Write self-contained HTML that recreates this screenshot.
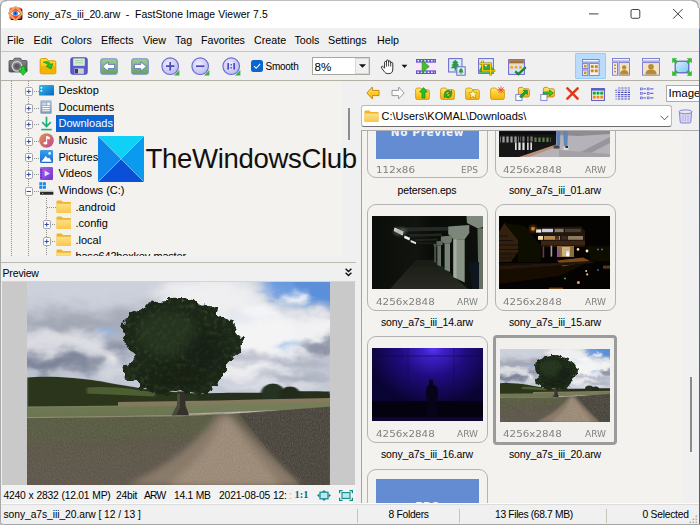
<!DOCTYPE html>
<html lang="en">
<head>
<meta charset="utf-8">
<title>FastStone Image Viewer</title>
<style>
*{box-sizing:border-box;margin:0;padding:0}
html,body{width:700px;height:525px;overflow:hidden}
body{position:relative;background:#f0f0f0;font-family:"Liberation Sans",sans-serif;color:#000;font-size:11px}
.abs{position:absolute}
.t{position:absolute;white-space:pre;line-height:1}
#win{position:absolute;left:0;top:0;width:700px;height:525px;background:#f0f0f0;overflow:hidden}
#title{position:absolute;left:0;top:0;width:700px;height:28px;background:#fff}
#menu{position:absolute;left:0;top:28px;width:700px;height:23px;background:#f0f0f0}
#menu .t{font-size:10.7px;top:7px;color:#000}
#tb{position:absolute;left:0;top:51px;width:700px;height:30px;background:#f0f0f0}
#tree{position:absolute;left:2px;top:81px;width:339.5px;height:175px;background:#f3f2ee;overflow:hidden}
#tree .t{font-size:11px;color:#000}
#prevhdr{position:absolute;left:0;top:262px;width:356px;height:20px;background:#f0f0f0;border-top:1px solid #bcb8ad;border-bottom:1px solid #d4d4d4}
#prev{position:absolute;left:2px;top:282px;width:353px;height:203px;background:#c9c9c9}
#info{position:absolute;left:0;top:485px;width:356px;height:18.5px;background:#f2f2f2}
#status{position:absolute;left:0;top:503px;width:700px;height:23px;background:#f0f0f0;border-top:1.5px solid #fbfbfb}
#right{position:absolute;left:361px;top:131px;width:322px;height:372px;background:#f3f2ee;overflow:hidden}
.vdot{width:1px;background:repeating-linear-gradient(to bottom,#8f8f8f 0,#8f8f8f 1px,transparent 1px,transparent 2px)}
.hdot{height:1px;background:repeating-linear-gradient(to right,#8f8f8f 0,#8f8f8f 1px,transparent 1px,transparent 2px)}
.thumb{position:absolute;width:121px;height:107px;border:1px solid #b3b3b3;border-radius:9px;background:#f3f2ee}
.thumb.sel{border:3px solid #9a9a9a;border-radius:3px;background:#e9e9e9}
.meta{position:absolute;font-family:"DejaVu Sans","Liberation Sans",sans-serif;font-size:8.4px;color:#808080;white-space:pre;line-height:1;transform:scaleX(1.235);transform-origin:0 0}
.meta.r{transform-origin:100% 0;transform:scaleX(1.08)}
.cap{position:absolute;font-size:10.5px;letter-spacing:-0.16px;white-space:pre;line-height:1;text-align:center;width:128px}
</style>
</head>
<body>
<div id="win">
<!-- TITLE BAR -->
<div id="title">
  <svg class="abs" style="left:8px;top:5.5px" width="15.5" height="15.5" viewBox="0 0 16 16"><defs><linearGradient id="gIco" x1="0" y1="0" x2="1" y2="1"><stop offset="0" stop-color="#ff7a4a"/><stop offset="1" stop-color="#f02a0c"/></linearGradient><radialGradient id="gEye" cx="0.5" cy="0.5" r="0.5"><stop offset="0" stop-color="#0a1a50"/><stop offset="0.35" stop-color="#1668d8"/><stop offset="1" stop-color="#49a8f6"/></radialGradient></defs><rect x="2.4" y="2.6" width="12.4" height="11.8" rx="1.2" fill="#1a0a06"/><rect x="1.4" y="1.6" width="12.4" height="11.8" rx="1.6" fill="url(#gIco)"/><path d="M7.8 0.6 L14.8 7.6 L7.8 14.8 L0.6 7.6 Z" fill="none" stroke="#e0ac72" stroke-width="1.9"/><path d="M2.6 7.7 Q7.8 2.8 13 7.7 Q7.8 12.4 2.6 7.7 Z" fill="#fff4ea"/><circle cx="7.6" cy="7.6" r="2.7" fill="url(#gEye)"/></svg>
  <svg class="abs" style="left:588px;top:8px" width="100" height="12" viewBox="0 0 100 12"><path d="M1 5.9 H10.4" stroke="#2a2a2a" stroke-width="0.9"/><rect x="43" y="1.5" width="8.8" height="8.8" rx="1.5" fill="none" stroke="#2a2a2a" stroke-width="0.9"/><path d="M85.2 1 L94.6 10.6 M94.6 1 L85.2 10.6" stroke="#2a2a2a" stroke-width="0.9"/></svg>

  <span class="t" style="left:27.5px;top:10px;font-size:10.4px;letter-spacing:-0.08px">sony_a7s_iii_20.arw</span><span class="t" style="left:125.8px;top:10px;font-size:10.4px">-</span><span class="t" style="left:135px;top:10px;font-size:10.4px;letter-spacing:0.07px">FastStone Image Viewer 7.5</span>
</div>
<!-- MENU -->
<div id="menu">
  <span class="t" style="left:7.0px">File</span>
  <span class="t" style="left:33.5px">Edit</span>
  <span class="t" style="left:61.0px">Colors</span>
  <span class="t" style="left:101.0px">Effects</span>
  <span class="t" style="left:143.0px">View</span>
  <span class="t" style="left:175.0px">Tag</span>
  <span class="t" style="left:201.0px">Favorites</span>
  <span class="t" style="left:254.0px">Create</span>
  <span class="t" style="left:294.5px">Tools</span>
  <span class="t" style="left:328.0px">Settings</span>
  <span class="t" style="left:377.0px">Help</span>
</div>
<!-- TOOLBAR -->
<div id="tb"></div>
<div class="abs" style="left:0;top:51px;width:700px;height:1px;background:#c9c5bb"></div>
<div class="abs" style="left:0;top:80px;width:700px;height:1px;background:#b5b0a6"></div>
<svg width="0" height="0" style="position:absolute"><defs>
<linearGradient id="gGrn" x1="0" y1="0" x2="0" y2="1"><stop offset="0" stop-color="#9ccf93"/><stop offset="1" stop-color="#62a35a"/></linearGradient>
<radialGradient id="gLav" cx="0.4" cy="0.35" r="0.7"><stop offset="0" stop-color="#eeeeff"/><stop offset="1" stop-color="#b9b9f2"/></radialGradient>
<linearGradient id="gCam" x1="0" y1="0" x2="0" y2="1"><stop offset="0" stop-color="#8c8c92"/><stop offset="1" stop-color="#55555c"/></linearGradient>
<linearGradient id="gYel" x1="0" y1="0" x2="0" y2="1"><stop offset="0" stop-color="#ffe23a"/><stop offset="1" stop-color="#f0b000"/></linearGradient>
<linearGradient id="gBlu" x1="0" y1="0" x2="1" y2="1"><stop offset="0" stop-color="#d9f0ff"/><stop offset="1" stop-color="#7cc6f2"/></linearGradient>
</defs></svg>
<!-- camera -->
<svg class="abs" style="left:8px;top:57px" width="20" height="19" viewBox="0 0 20 19"><path d="M1 4.5 Q1 3.5 2 3.5 H5 L6.5 1.2 H12.5 L14 3.5 H18 Q19 3.5 19 4.5 V14 Q19 15 18 15 H2 Q1 15 1 14 Z" fill="url(#gCam)" stroke="#4a4a50" stroke-width="0.8"/><circle cx="9" cy="9.3" r="4.8" fill="#7d7d84" stroke="#d2d2d6" stroke-width="1.3"/><circle cx="9" cy="9.3" r="2.6" fill="#5a5a61"/><path d="M13.2 9.5 H17 V13.2 H19.3 L15.1 18.3 L10.9 13.2 H13.2 Z" fill="#22d02a" stroke="#0c8a14" stroke-width="0.7"/></svg>
<!-- open folder -->
<svg class="abs" style="left:39px;top:57px" width="18" height="18" viewBox="0 0 18 18"><path d="M1.2 3 Q1.2 1.6 2.6 1.6 H7.5 L9.5 3.8 H15.4 Q16.8 3.8 16.8 5.2 V15.4 Q16.8 16.8 15.4 16.8 H2.6 Q1.2 16.8 1.2 15.4 Z" fill="url(#gYel)" stroke="#d59a00" stroke-width="1"/><path d="M1.8 9 H16.2 V15.4 Q16.2 16.2 15.4 16.2 H2.6 Q1.8 16.2 1.8 15.4 Z" fill="#f2b400"/><path d="M4.2 5.2 C7.5 3.6 10.6 4.6 11.6 7.4 L13.8 6.6 L12 12 L7 9.2 L9.3 8.3 C8.6 6.6 6.6 6 4.2 5.2 Z" fill="#1fc62a" stroke="#0e8a16" stroke-width="0.6"/></svg>
<!-- save -->
<svg class="abs" style="left:70px;top:57px" width="18" height="18" viewBox="0 0 18 18"><rect x="0.8" y="0.8" width="16.4" height="16.4" rx="1.6" fill="#5c5ccc" stroke="#4444b0" stroke-width="0.9"/><rect x="3.2" y="1.4" width="11.6" height="7.4" fill="#d8efd4"/><path d="M5 3.6 H13 M5 5.8 H13" stroke="#a9cfa6" stroke-width="1"/><rect x="4.6" y="11.4" width="9.2" height="5.4" fill="#cfcfd6"/><rect x="5" y="12" width="3" height="4.4" fill="#3c3c60"/></svg>
<!-- prev / next -->
<svg class="abs" style="left:100px;top:57.5px" width="18" height="17" viewBox="0 0 18 17"><rect x="0.7" y="0.7" width="16.6" height="15.6" rx="2.6" fill="url(#gGrn)" stroke="#7d8fd0" stroke-width="1.1"/><path d="M2.6 8.5 L8.2 3.8 V6.4 H14.6 V10.6 H8.2 V13.2 Z" fill="#fff" stroke="#5a62c0" stroke-width="0.8"/></svg>
<svg class="abs" style="left:130.5px;top:57.5px" width="18" height="17" viewBox="0 0 18 17"><rect x="0.7" y="0.7" width="16.6" height="15.6" rx="2.6" fill="url(#gGrn)" stroke="#7d8fd0" stroke-width="1.1"/><path d="M15.4 8.5 L9.8 3.8 V6.4 H3.4 V10.6 H9.8 V13.2 Z" fill="#fff" stroke="#5a62c0" stroke-width="0.8"/></svg>
<!-- zoom in / out / 1:1 -->
<svg class="abs" style="left:160.5px;top:57px" width="19" height="19" viewBox="0 0 19 19"><path d="M13 18.4 H18.4 V13 Z" fill="#3fae45"/><circle cx="9.2" cy="9.2" r="8.3" fill="url(#gLav)" stroke="#6a6acc" stroke-width="1.1"/><path d="M5 9.2 H13.4 M9.2 5 V13.4" stroke="#4a4ab4" stroke-width="1.7"/></svg>
<svg class="abs" style="left:191px;top:57px" width="19" height="19" viewBox="0 0 19 19"><path d="M13 18.4 H18.4 V13 Z" fill="#3fae45"/><circle cx="9.2" cy="9.2" r="8.3" fill="url(#gLav)" stroke="#6a6acc" stroke-width="1.1"/><path d="M5 9.2 H13.4" stroke="#4a4ab4" stroke-width="1.7"/></svg>
<svg class="abs" style="left:221.5px;top:57px" width="19" height="19" viewBox="0 0 19 19"><path d="M13 18.4 H18.4 V13 Z" fill="#3fae45"/><circle cx="9.2" cy="9.2" r="8.3" fill="url(#gLav)" stroke="#6a6acc" stroke-width="1.1"/><path d="M6.2 6 V12.4 M12.2 6 V12.4" stroke="#4a4ab4" stroke-width="1.7"/><path d="M9.2 7 V8.4 M9.2 10 V11.4" stroke="#4a4ab4" stroke-width="1.3"/></svg>
<!-- checkbox + smooth -->
<div class="abs" style="left:251px;top:60px;width:12px;height:12px;background:#0a64d1;border-radius:2.5px"></div>
<svg class="abs" style="left:251px;top:60px" width="12" height="12" viewBox="0 0 12 12"><path d="M3 6.2 L5.2 8.3 L9.2 3.8" fill="none" stroke="#fff" stroke-width="1.1"/></svg>
<span class="t" style="left:265.5px;top:61.5px;font-size:10px;letter-spacing:-0.25px">Smooth</span>
<!-- combo -->
<div class="abs" style="left:312px;top:57px;width:58px;height:18px;background:#fff;border:1px solid #aaa69c"></div>
<div class="abs" style="left:355px;top:58px;width:14px;height:16px;background:#f0f0f0;border:1px solid #d8d8d8"></div>
<span class="t" style="left:314.5px;top:60.5px;font-size:11.6px">8%</span>
<svg class="abs" style="left:358px;top:63px" width="9" height="6" viewBox="0 0 9 6"><path d="M1 1.2 H8 L4.5 4.8 Z" fill="#111"/></svg>
<!-- hand -->
<svg class="abs" style="left:380px;top:59px" width="16" height="16" viewBox="0 0 16 16"><path d="M4.6 9.2 V3.6 Q4.6 2.4 5.6 2.4 Q6.5 2.4 6.5 3.6 V2.2 Q6.5 1 7.6 1 Q8.6 1 8.6 2.2 V3 Q8.6 1.9 9.7 1.9 Q10.7 1.9 10.7 3 V4.4 Q10.7 3.4 11.7 3.4 Q12.8 3.4 12.8 4.6 V10 Q12.8 14.6 8.8 14.6 H7.6 Q5.6 14.6 4.4 12.8 L1.6 9 Q1 8 1.8 7.4 Q2.6 6.9 3.4 7.8 Z" fill="#fff" stroke="#1a1a1a" stroke-width="0.9"/><path d="M6.5 3.6 V7.6 M8.6 3 V7.4 M10.7 4.4 V7.6" stroke="#1a1a1a" stroke-width="0.8"/></svg>
<svg class="abs" style="left:401px;top:64px" width="7" height="5" viewBox="0 0 7 5"><path d="M0.6 0.8 H6.4 L3.5 4 Z" fill="#111"/></svg>
<!-- slideshow -->
<svg class="abs" style="left:416px;top:59px" width="20" height="15" viewBox="0 0 20 15"><rect width="20" height="15" fill="#fbd0f2"/><rect y="4" width="20" height="7" fill="#fde4f6"/><rect width="20" height="3.6" fill="#5a5acc"/><rect y="11.4" width="20" height="3.6" fill="#5a5acc"/><path d="M1.4 1.8 H19" stroke="#e8e8ff" stroke-width="1.5" stroke-dasharray="1.7 1.7"/><path d="M1.4 13.2 H19" stroke="#e8e8ff" stroke-width="1.5" stroke-dasharray="1.7 1.7"/><path d="M6.2 1.6 L13.2 7.5 L6.2 13.4 Z" fill="#3fc22e" stroke="#25901c" stroke-width="0.7"/></svg>
<!-- compare -->
<svg class="abs" style="left:447.5px;top:57.5px" width="18" height="18" viewBox="0 0 18 18"><rect x="0.6" y="0.6" width="13.4" height="13.4" fill="#d8ecfc" stroke="#6868c8" stroke-width="1"/><path d="M7.2 1.8 L10.6 5 H9 L11.4 7.6 H9.4 L12 10.2 H2.6 L5.2 7.6 H3.2 L5.6 5 H4 Z" fill="#2b9a3c"/><rect x="6.6" y="10" width="1.4" height="2.6" fill="#2b9a3c"/><rect x="8.8" y="8.8" width="8.4" height="8.4" fill="#e2f1fd" stroke="#6868c8" stroke-width="1"/><path d="M13 10 L15.4 12.4 H14.2 L15.8 14.4 H10.2 L11.8 12.4 H10.6 Z" fill="#2b9a3c"/><rect x="12.5" y="14.2" width="1.1" height="1.8" fill="#2b9a3c"/></svg>
<!-- crop -->
<svg class="abs" style="left:477.5px;top:57.5px" width="18" height="18" viewBox="0 0 18 18"><rect x="0.6" y="0.6" width="14.8" height="14.8" fill="#dbeefd" stroke="#6868c8" stroke-width="1"/><path d="M1.2 12 L5 5.4 L8 9 L10.8 4.4 L14.8 10 V14.8 H1.2 Z" fill="#37a545"/><path d="M4.6 2.8 V12.8 H17.2 M1.6 5.6 H12.6 V17.4" fill="none" stroke="#9a7400" stroke-width="2.4"/><path d="M4.6 2.8 V12.8 H17.2 M1.6 5.6 H12.6 V17.4" fill="none" stroke="#f6d200" stroke-width="1.2"/></svg>
<!-- batch -->
<svg class="abs" style="left:507.5px;top:58.5px" width="19" height="17" viewBox="0 0 19 17"><rect x="0.6" y="0.6" width="15.8" height="14.8" fill="#d4e3f6" stroke="#6868c8" stroke-width="1"/><rect x="1.2" y="1.2" width="14.6" height="3.4" fill="#a4703a"/><rect x="1.2" y="4.6" width="14.6" height="1.2" fill="#e9d9bd"/><rect x="2.4" y="7" width="2.6" height="2.6" fill="#f0a62c"/><rect x="6.8" y="7" width="2.6" height="2.6" fill="#f0a62c"/><rect x="11.2" y="7" width="2.6" height="2.6" fill="#f0a62c"/><path d="M7.2 12.4 L10.4 15.2 L17.8 8.2" fill="none" stroke="#128a2a" stroke-width="2.3"/></svg>
<!-- layout group -->
<div class="abs" style="left:575px;top:53px;width:31px;height:26px;background:#b9dcfc;border:1px solid #9acbf7;border-radius:1px"></div>
<svg class="abs" style="left:582px;top:58.5px" width="18" height="17" viewBox="0 0 18 17"><rect x="0.5" y="0.5" width="16.6" height="2.6" fill="#f4f4ff" stroke="#7878d0" stroke-width="0.9"/><rect x="0.5" y="4.6" width="5.4" height="5" fill="#f0e6d2" stroke="#7878d0" stroke-width="0.9"/><rect x="0.5" y="11" width="5.4" height="5.4" fill="#f0e6d2" stroke="#7878d0" stroke-width="0.9"/><rect x="2" y="6" width="2.4" height="2.4" fill="#c79538"/><rect x="2" y="12.6" width="2.4" height="2.4" fill="#c79538"/><rect x="7.4" y="4.6" width="9.7" height="11.8" fill="#fbf6ea" stroke="#7878d0" stroke-width="0.9"/><rect x="8.8" y="6.2" width="2.9" height="2.9" fill="#c88a18"/><rect x="12.8" y="6.2" width="2.9" height="2.9" fill="#c88a18"/><rect x="8.8" y="10.4" width="2.9" height="2.9" fill="#c88a18"/><rect x="12.8" y="10.4" width="2.9" height="2.9" fill="#c88a18"/></svg>
<svg class="abs" style="left:611.5px;top:57.5px" width="18" height="18" viewBox="0 0 18 18"><rect x="0.5" y="0.5" width="17" height="2.6" fill="#f4f4ff" stroke="#7878d0" stroke-width="0.9"/><rect x="0.5" y="4.6" width="5" height="12.6" fill="#f3efe6" stroke="#7878d0" stroke-width="0.9"/><rect x="2" y="6.4" width="2" height="1.6" fill="#c79538"/><rect x="2" y="9.6" width="2" height="1.6" fill="#c79538"/><rect x="2" y="12.8" width="2" height="1.6" fill="#c79538"/><rect x="7" y="4.6" width="10.5" height="12.6" fill="#efe3c8" stroke="#7878d0" stroke-width="0.9"/><circle cx="12.2" cy="9.4" r="2.2" fill="#b88a36"/><path d="M8 16.6 Q8 12 12.2 12 Q16.6 12 16.6 16.6 Z" fill="#b88a36"/></svg>
<svg class="abs" style="left:641.5px;top:57.5px" width="18" height="18" viewBox="0 0 18 18"><rect x="0.5" y="0.5" width="17" height="2.6" fill="#f4f4ff" stroke="#7878d0" stroke-width="0.9"/><rect x="0.5" y="4.6" width="17" height="12.6" fill="#efe3c8" stroke="#7878d0" stroke-width="0.9"/><circle cx="9" cy="8.8" r="2.8" fill="#b88a36"/><path d="M3.4 16.6 Q3.4 11.6 9 11.6 Q14.6 11.6 14.6 16.6 Z" fill="#b88a36"/></svg>
<!-- fullscreen -->
<svg class="abs" style="left:671.5px;top:57.5px" width="20" height="18" viewBox="0 0 20 18"><rect x="3.2" y="3.2" width="13.6" height="11.6" fill="url(#gBlu)" stroke="#4f4fd0" stroke-width="1.1"/><g fill="#2fc22a" stroke="#1a9a1c" stroke-width="0.4"><path d="M0.4 0.4 H4.8 L3.4 1.8 L5.6 4 L4 5.6 L1.8 3.4 L0.4 4.8 Z"/><path d="M19.6 0.4 H15.2 L16.6 1.8 L14.4 4 L16 5.6 L18.2 3.4 L19.6 4.8 Z"/><path d="M0.4 17.6 H4.8 L3.4 16.2 L5.6 14 L4 12.4 L1.8 14.6 L0.4 13.2 Z"/><path d="M19.6 17.6 H15.2 L16.6 16.2 L14.4 14 L16 12.4 L18.2 14.6 L19.6 13.2 Z"/></g></svg>

<!-- TREE -->
<div id="tree">
<svg width="0" height="0" style="position:absolute">
<defs>
<linearGradient id="gDesk" x1="0" y1="0" x2="1" y2="1"><stop offset="0" stop-color="#2fc3f0"/><stop offset="1" stop-color="#0c63be"/></linearGradient>
<linearGradient id="gDoc" x1="0" y1="0" x2="0" y2="1"><stop offset="0" stop-color="#a9bdd6"/><stop offset="1" stop-color="#7d97ba"/></linearGradient>
<linearGradient id="gMus" x1="0" y1="0" x2="1" y2="1"><stop offset="0" stop-color="#f08a4a"/><stop offset="1" stop-color="#b84a98"/></linearGradient>
<linearGradient id="gPic" x1="0" y1="0" x2="0" y2="1"><stop offset="0" stop-color="#3ba0ee"/><stop offset="1" stop-color="#1769cf"/></linearGradient>
<linearGradient id="gVid" x1="0" y1="0" x2="1" y2="1"><stop offset="0" stop-color="#a860f0"/><stop offset="1" stop-color="#7038c8"/></linearGradient>
<linearGradient id="gFol" x1="0" y1="0" x2="0" y2="1"><stop offset="0" stop-color="#fde08a"/><stop offset="1" stop-color="#f9c74a"/></linearGradient>
<symbol id="iFolder" viewBox="0 0 16 14"><path d="M0.5 1.6 Q0.5 0.6 1.5 0.6 H5.6 L7.2 2.2 H14.5 Q15.5 2.2 15.5 3.2 V12.4 Q15.5 13.4 14.5 13.4 H1.5 Q0.5 13.4 0.5 12.4 Z" fill="#f0b429"/><path d="M0.5 4.6 Q0.5 3.8 1.5 3.8 H14.5 Q15.5 3.8 15.5 4.6 V12.4 Q15.5 13.4 14.5 13.4 H1.5 Q0.5 13.4 0.5 12.4 Z" fill="url(#gFol)"/></symbol>
<symbol id="iPlus" viewBox="0 0 8 9"><rect x="0.5" y="0.5" width="7" height="8" rx="1.3" fill="#fcfcfc" stroke="#a6a6a6"/><path d="M1.6 4.5 H5.8 M3.7 2.4 V6.6" stroke="#2f4aa4" stroke-width="1"/></symbol>
<symbol id="iMinus" viewBox="0 0 8 9"><rect x="0.5" y="0.5" width="7" height="8" rx="1.3" fill="#fcfcfc" stroke="#a6a6a6"/><path d="M1.6 4.5 H5.8" stroke="#2f4aa4" stroke-width="1"/></symbol>
</defs>
</svg>
<!-- dotted guides -->
<div class="abs vdot" style="left:9px;top:0;height:176px"></div>
<div class="abs vdot" style="left:26px;top:0;height:176px"></div>
<div class="abs vdot" style="left:44px;top:117px;height:59px"></div>
<!-- rows -->
<div class="abs hdot" style="left:30px;top:10px;width:7px"></div>
<div class="abs hdot" style="left:30px;top:27px;width:7px"></div>
<div class="abs hdot" style="left:30px;top:43px;width:7px"></div>
<div class="abs hdot" style="left:30px;top:60px;width:7px"></div>
<div class="abs hdot" style="left:30px;top:77px;width:7px"></div>
<div class="abs hdot" style="left:30px;top:93px;width:7px"></div>
<div class="abs hdot" style="left:30px;top:110px;width:7px"></div>
<div class="abs hdot" style="left:45px;top:126px;width:9px"></div>
<div class="abs hdot" style="left:48px;top:143px;width:6px"></div>
<div class="abs hdot" style="left:48px;top:160px;width:6px"></div>
<svg class="abs" style="left:23px;top:6px" width="8" height="9"><use href="#iPlus"/></svg>
<svg class="abs" style="left:23px;top:23px" width="8" height="9"><use href="#iPlus"/></svg>
<svg class="abs" style="left:23px;top:39px" width="8" height="9"><use href="#iPlus"/></svg>
<svg class="abs" style="left:23px;top:56px" width="8" height="9"><use href="#iPlus"/></svg>
<svg class="abs" style="left:23px;top:72px" width="8" height="9"><use href="#iPlus"/></svg>
<svg class="abs" style="left:23px;top:89px" width="8" height="9"><use href="#iPlus"/></svg>
<svg class="abs" style="left:23px;top:106px" width="8" height="9"><use href="#iMinus"/></svg>
<svg class="abs" style="left:41px;top:139px" width="8" height="9"><use href="#iPlus"/></svg>
<svg class="abs" style="left:41px;top:156px" width="8" height="9"><use href="#iPlus"/></svg>
<!-- icons -->
<svg class="abs" style="left:37px;top:3.5px" width="15" height="11" viewBox="0 0 15 11"><rect x="0" y="0" width="15" height="10.6" rx="1.2" fill="url(#gDesk)"/><rect x="1.6" y="2" width="1.6" height="1.6" fill="#fff"/><rect x="1.6" y="5" width="1.6" height="1.6" fill="#fff"/></svg>
<svg class="abs" style="left:38px;top:19px" width="12" height="14" viewBox="0 0 12 14"><rect x="0.3" y="0.3" width="11.4" height="13.4" rx="1.3" fill="url(#gDoc)"/><path d="M2.3 4 H6 M2.3 6.5 H9.7 M2.3 8.6 H9.7 M2.3 10.7 H9.7" stroke="#fff" stroke-width="1.1"/><rect x="7.3" y="2.8" width="2.4" height="2.2" fill="#fff"/></svg>
<svg class="abs" style="left:38px;top:35px" width="13" height="15" viewBox="0 0 13 15"><path d="M6.5 0.8 V10 M2.2 6.2 L6.5 10.6 L10.8 6.2" fill="none" stroke="#1db27e" stroke-width="1.7"/><path d="M1.2 13.6 H11.8" stroke="#1db27e" stroke-width="1.6"/></svg>
<svg class="abs" style="left:36.5px;top:51.5px" width="15" height="15" viewBox="0 0 15 15"><circle cx="7.5" cy="7.5" r="7.3" fill="url(#gMus)"/><path d="M7.6 3.2 V10 M7.6 3.4 L10.2 4.4 V5.8 L7.6 4.8" stroke="#fff" stroke-width="1.1" fill="#fff"/><ellipse cx="6.4" cy="10.2" rx="1.8" ry="1.4" fill="#fff"/></svg>
<svg class="abs" style="left:37.5px;top:69px" width="13" height="13" viewBox="0 0 13 13"><rect width="13" height="13" rx="1.3" fill="url(#gPic)"/><path d="M1.2 11.8 L5.8 6 L8 8.6 L9.2 7.4 L11.8 11.8 Z" fill="#fff"/><circle cx="9.6" cy="3.4" r="1.3" fill="#fff"/></svg>
<svg class="abs" style="left:37.5px;top:85.5px" width="13" height="13" viewBox="0 0 13 13"><rect width="13" height="13" rx="1.3" fill="url(#gVid)"/><path d="M4.6 3.4 L10 6.5 L4.6 9.6 Z" fill="#e9d8ff"/><path d="M1.2 2 V11" stroke="#4b2296" stroke-width="1.2" stroke-dasharray="1.4 1.2"/></svg>
<svg class="abs" style="left:36.5px;top:100.5px" width="15" height="15" viewBox="0 0 15 15"><rect x="0.3" y="0.2" width="3" height="3" fill="#1e88e5"/><rect x="3.9" y="0.2" width="3" height="3" fill="#1e88e5"/><rect x="0.3" y="3.8" width="3" height="3" fill="#1e88e5"/><rect x="3.9" y="3.8" width="3" height="3" fill="#1e88e5"/><rect x="1" y="8.6" width="13.4" height="1.6" fill="#bdbdbd"/><rect x="1" y="10" width="13.4" height="2.8" rx="0.6" fill="#2b2b2b"/><rect x="3" y="10.9" width="1.4" height="1" fill="#41d04a"/></svg>
<svg class="abs" style="left:54px;top:118.5px" width="15.5" height="13.5"><use href="#iFolder"/></svg>
<svg class="abs" style="left:54px;top:135px" width="15.5" height="13.5"><use href="#iFolder"/></svg>
<svg class="abs" style="left:54px;top:151.5px" width="15.5" height="13.5"><use href="#iFolder"/></svg>
<svg class="abs" style="left:54px;top:168px" width="15.5" height="13.5"><use href="#iFolder"/></svg>
<!-- labels -->
<div class="abs" style="left:54px;top:34px;width:58px;height:17px;background:#0a64d1"></div>
<span class="t" style="left:56.5px;top:4px">Desktop</span>
<span class="t" style="left:56.5px;top:20.5px">Documents</span>
<span class="t" style="left:56.5px;top:37px;color:#fff">Downloads</span>
<span class="t" style="left:56.5px;top:54px">Music</span>
<span class="t" style="left:56.5px;top:70.5px">Pictures</span>
<span class="t" style="left:56.5px;top:87px">Videos</span>
<span class="t" style="left:56.5px;top:103.5px">Windows (C:)</span>
<span class="t" style="left:73.5px;top:120.5px">.android</span>
<span class="t" style="left:73.5px;top:137px">.config</span>
<span class="t" style="left:73.5px;top:153.5px">.local</span>
<span class="t" style="left:73.5px;top:169.5px;letter-spacing:-0.2px">base642hexkey-master</span>
</div>
<!-- PREVIEW -->
<div id="prevhdr"><span class="t" style="left:2.5px;top:5px;font-size:10.5px;letter-spacing:-0.15px">Preview</span><svg class="abs" style="left:345px;top:5px" width="7" height="9" viewBox="0 0 7 9"><path d="M0.6 0.8 L3.5 3.6 L6.4 0.8 M0.6 4.8 L3.5 7.6 L6.4 4.8" fill="none" stroke="#111" stroke-width="1.4"/></svg></div>
<div id="prev">
<svg width="0" height="0" style="position:absolute"><defs>
<filter id="b3" filterUnits="userSpaceOnUse" x="-60" y="-60" width="423" height="324"><feGaussianBlur stdDeviation="3"/></filter>
<filter id="b5" filterUnits="userSpaceOnUse" x="-60" y="-60" width="423" height="324"><feGaussianBlur stdDeviation="5"/></filter>
<filter id="b8" filterUnits="userSpaceOnUse" x="-60" y="-60" width="423" height="324"><feGaussianBlur stdDeviation="8"/></filter>
<filter id="b1" filterUnits="userSpaceOnUse" x="-60" y="-60" width="423" height="324"><feGaussianBlur stdDeviation="0.8"/></filter>
<filter id="cloudy" filterUnits="userSpaceOnUse" x="-20" y="-20" width="343" height="170"><feTurbulence type="fractalNoise" baseFrequency="0.035 0.06" numOctaves="3" seed="11"/><feDisplacementMap in="SourceGraphic" scale="22" xChannelSelector="R" yChannelSelector="G"/></filter>
<filter id="leaf" x="-10%" y="-10%" width="120%" height="120%" color-interpolation-filters="sRGB"><feTurbulence type="fractalNoise" baseFrequency="0.13" numOctaves="3" seed="4" result="n1"/><feDisplacementMap in="SourceGraphic" in2="n1" scale="12" xChannelSelector="R" yChannelSelector="G" result="disp"/><feTurbulence type="fractalNoise" baseFrequency="0.22" numOctaves="2" seed="9" result="n2"/><feColorMatrix in="n2" type="matrix" values="0 0 0 0 0.2  0 0 0 0 0.27  0 0 0 0 0.16  2.4 0 0 0 -1.15" result="tex"/><feComposite in="tex" in2="disp" operator="in" result="texin"/><feMerge><feMergeNode in="disp"/><feMergeNode in="texin"/></feMerge></filter>
<filter id="soil" x="0" y="0" width="100%" height="100%"><feTurbulence type="fractalNoise" baseFrequency="0.9 0.5" numOctaves="2" seed="7"/><feColorMatrix values="0 0 0 0 0.2  0 0 0 0 0.18  0 0 0 0 0.14  0.9 0.9 0.9 0 -1.05"/></filter>
<linearGradient id="sky" x1="0" y1="0" x2="0" y2="1"><stop offset="0" stop-color="#c6cad5"/><stop offset="1" stop-color="#c3c8d4"/></linearGradient>
<linearGradient id="fld" x1="0" y1="0" x2="0" y2="1"><stop offset="0" stop-color="#57593f"/><stop offset="0.35" stop-color="#5a5546"/><stop offset="1" stop-color="#5e554b"/></linearGradient>
<clipPath id="pc"><rect width="303" height="204"/></clipPath>
</defs><symbol id="treePhoto" viewBox="0 0 303 204" preserveAspectRatio="none">
<g clip-path="url(#pc)">
<rect width="303" height="125" fill="url(#sky)"/>
<g filter="url(#cloudy)">
<!-- blue sky top right -->
<ellipse cx="290" cy="6" rx="50" ry="20" fill="#5b8fda" filter="url(#b5)"/>
<ellipse cx="250" cy="4" rx="20" ry="8" fill="#6a9be0" filter="url(#b5)"/>
<ellipse cx="225" cy="32" rx="26" ry="5" fill="#8ab2e8" filter="url(#b5)"/>
<!-- big white clouds centre/right -->
<ellipse cx="180" cy="16" rx="58" ry="24" fill="#efeff1" filter="url(#b8)"/>
<ellipse cx="235" cy="55" rx="62" ry="24" fill="#f4f4f5" filter="url(#b8)"/>
<ellipse cx="268" cy="16" rx="15" ry="7" fill="#eceef3" filter="url(#b3)"/>
<ellipse cx="292" cy="46" rx="22" ry="14" fill="#f2f2f4" filter="url(#b5)"/>
<ellipse cx="236" cy="30" rx="20" ry="9" fill="#f6f6f7" filter="url(#b5)"/>
<ellipse cx="220" cy="88" rx="48" ry="9" fill="#eeeef1" filter="url(#b5)"/>
<!-- top-left greys -->
<ellipse cx="50" cy="6" rx="90" ry="16" fill="#cdd1db" filter="url(#b8)"/>
<ellipse cx="45" cy="42" rx="70" ry="10" fill="#999eac" filter="url(#b8)"/>
<ellipse cx="120" cy="36" rx="40" ry="8" fill="#a4a8b5" filter="url(#b8)"/>
<ellipse cx="40" cy="62" rx="60" ry="11" fill="#dcdde2" filter="url(#b5)"/>
<ellipse cx="74" cy="78" rx="18" ry="6" fill="#ededee" filter="url(#b3)"/>
<ellipse cx="80" cy="50" rx="10" ry="3" fill="#86b3ea" filter="url(#b3)"/>
<ellipse cx="28" cy="82" rx="46" ry="10" fill="#7c8398" filter="url(#b5)"/>
<ellipse cx="92" cy="64" rx="16" ry="9" fill="#8a90a4" filter="url(#b5)"/>
<ellipse cx="30" cy="95" rx="50" ry="2.5" fill="#c6cad4" filter="url(#b3)"/>
<ellipse cx="88" cy="92" rx="16" ry="5" fill="#d4d7de" filter="url(#b3)"/>
<!-- right greys -->
<ellipse cx="292" cy="66" rx="18" ry="6" fill="#8a90a3" filter="url(#b3)"/>
<ellipse cx="262" cy="63" rx="13" ry="2.6" fill="#8db5e6" filter="url(#b3)"/>
<ellipse cx="212" cy="76" rx="30" ry="4" fill="#b4b8c6" filter="url(#b3)"/>
<ellipse cx="270" cy="82" rx="36" ry="4" fill="#aab0c0" filter="url(#b3)"/>
<ellipse cx="272" cy="97" rx="36" ry="3.5" fill="#a4aaba" filter="url(#b3)"/>
<ellipse cx="245" cy="106" rx="50" ry="3" fill="#e6e7ec" filter="url(#b3)"/>
<ellipse cx="200" cy="104" rx="16" ry="3" fill="#cdd3e0" filter="url(#b3)"/>
</g>
<!-- distant hill and treeline -->
<path d="M0 96 C20 94 50 96 75 100 C95 104 110 106 125 109 L170 112 L303 112 L303 126 L0 127 Z" fill="#2a351f" filter="url(#b1)"/>
<path d="M60 106 C85 104 110 108 128 111 L128 115 L60 112 Z" fill="#4d5e30" filter="url(#b1)"/>
<path d="M170 113 C200 110 220 112 240 111 C270 109 290 110 303 110 L303 122 L170 124 Z" fill="#262f1e" filter="url(#b1)"/>
<!-- right small trees -->
<ellipse cx="246" cy="112" rx="12" ry="10" fill="#263120" filter="url(#b1)"/>
<ellipse cx="263" cy="113.5" rx="10.5" ry="8.5" fill="#222c1d" filter="url(#b1)"/><rect x="252" y="118" width="2.4" height="6" fill="#2a2a20"/>
<!-- far fields -->
<path d="M91 120.5 L190 119 L303 116.5 L303 122 L91 126 Z" fill="#85795e"/>
<path d="M0 125 L150 123.5 L303 121 L303 127 L0 138 Z" fill="#747f57"/>
<path d="M0 126.5 L150 125 L150 134 L0 136 Z" fill="#6c784f"/>
<path d="M0 135.6 L153 133.8 L197 132 L197 133.4 L153 135.2 L0 137 Z" fill="#a39c7f"/>
<!-- near field -->
<path d="M0 136.8 L153 135 L197 133 L303 125 L303 204 L0 204 Z" fill="url(#fld)"/>
<path d="M0 137.5 L190 134 L190 152 L0 162 Z" fill="#55603c" opacity="0.55" filter="url(#b3)"/>
<path d="M212 132.5 L303 125.5 L303 204 L273 204 C250 182 230 156 212 132.5 Z" fill="#47433a" filter="url(#b1)"/>
<!-- path -->
<path d="M190 135 C196 132 202 132 206 136 C216 146 238 172 274 204 L100 204 C140 186 172 160 190 135 Z" fill="#8d7c6b" filter="url(#b3)"/>
<path d="M195 139 C199 136 202 137 204 140 C212 152 234 180 254 204 L140 204 C166 186 186 162 195 139 Z" fill="#a4917e" filter="url(#b3)"/>
<path d="M0 137 L197 133 L303 125.5 L303 204 L0 204 Z" filter="url(#soil)" opacity="0.55"/>
<!-- main tree -->
<path d="M150 110 L158 110 L158.5 124 L162 134 L145 134 L150 124 Z" fill="#33312a"/><path d="M150 112 L153 112 L153 126 L149 134 L145 134 L150 124 Z" fill="#4a4a3a"/>
<path d="M152 108 L140 96 M156 108 L170 98" stroke="#222a1a" stroke-width="2.2"/>
<g filter="url(#leaf)">
<path d="M145 17 C160 16 175 21 185 28 C198 34 207 41 210 49 C213 56 217 60 214 66 C211 74 204 78 199 82 C197 88 196 92 193 95 C191 103 187 107 183 109 C175 114 165 113 158 110 L150 110 C140 114 125 113 114 109 C109 105 112 100 108 98 C101 100 96 97 95 92 C95 85 101 81 107 77 C104 70 98 64 97 57 C96 49 96 43 98 39 C100 31 107 27 114 25 C123 19 134 17 145 17 Z" fill="#1c2718"/>
<ellipse cx="104" cy="90" rx="9" ry="7" fill="#1e2a19"/>
<ellipse cx="203" cy="62" rx="10" ry="8" fill="#1d2919"/>
</g>
<ellipse cx="140" cy="52" rx="30" ry="22" fill="#2f4026" opacity="0.55" filter="url(#b5)"/>
<ellipse cx="178" cy="70" rx="20" ry="18" fill="#141d12" opacity="0.6" filter="url(#b5)"/>
<ellipse cx="150" cy="96" rx="30" ry="10" fill="#121a10" opacity="0.6" filter="url(#b5)"/>
</g>
</symbol></svg>
<svg class="abs" style="left:25px;top:0px" width="303" height="203"><use href="#treePhoto"/></svg>

</div>
<div id="info"><span class="t" style="left:3.5px;top:5.5px;font-size:10.3px;letter-spacing:-0.25px;word-spacing:0.5px">4240 x 2832 (12.01 MP)</span>
<span class="t" style="left:116px;top:5.5px;font-size:10.3px;letter-spacing:-0.25px">24bit</span>
<span class="t" style="left:144px;top:5.5px;font-size:10.3px;letter-spacing:-0.8px">ARW</span>
<span class="t" style="left:174px;top:5.5px;font-size:10.3px;letter-spacing:-0.25px">14.1 MB</span>
<span class="t" style="left:219px;top:5.5px;font-size:10.3px;letter-spacing:-0.15px">2021-08-05 12:</span>
<span class="t" style="left:289px;top:5.5px;font-size:10.3px;color:#d9a04a">:</span>
<span class="t" style="left:294.5px;top:5px;font-size:10.5px;font-weight:bold;color:#0b6f6f;font-family:'Liberation Serif',serif">1:1</span>
<svg class="abs" style="left:317px;top:4.5px" width="14" height="11" viewBox="0 0 14 11"><rect x="3" y="2.2" width="8" height="6.6" fill="#bfe6ee" stroke="#148a8a" stroke-width="1.2"/><path d="M7 0 L9 2 H5 Z M7 11 L9 9 H5 Z M0 5.5 L2.4 3.6 V7.4 Z M14 5.5 L11.6 3.6 V7.4 Z" fill="#148a8a"/></svg>
<svg class="abs" style="left:339px;top:4.5px" width="14" height="11" viewBox="0 0 14 11"><rect x="3" y="2.6" width="8" height="5.8" fill="#bfe6ee" stroke="#148a8a" stroke-width="1.1"/><path d="M0.6 3.2 V0.6 H3.6 M10.4 0.6 H13.4 V3.2 M13.4 7.8 V10.4 H10.4 M3.6 10.4 H0.6 V7.8" fill="none" stroke="#148a8a" stroke-width="1.2"/></svg>
</div>
<!-- RIGHT -->
<!-- splitter between left and right -->
<div class="abs" style="left:342px;top:81px;width:19px;height:181px;background:#f0f0f0"></div>
<div class="abs" style="left:348px;top:108px;width:2px;height:32px;background:#8d8d8d"></div>
<!-- right toolbar icons -->
<svg width="0" height="0" style="position:absolute"><defs>
<linearGradient id="gFy" x1="0" y1="0" x2="0" y2="1"><stop offset="0" stop-color="#ffe873"/><stop offset="0.55" stop-color="#fbc92a"/><stop offset="1" stop-color="#f2ae0a"/></linearGradient>
<symbol id="iYF" viewBox="0 0 15 13"><path d="M0.6 2.6 Q0.6 0.8 2.4 0.8 H5.8 L7.4 2.4 H12.6 Q14.4 2.4 14.4 4.2 V10.4 Q14.4 12.4 12.4 12.4 H2.6 Q0.6 12.4 0.6 10.4 Z" fill="url(#gFy)" stroke="#d79b05" stroke-width="0.9"/></symbol>
</defs></svg>
<svg class="abs" style="left:366px;top:86px" width="14" height="14" viewBox="0 0 14 14"><path d="M0.8 7 L6.4 1 V4.4 H13 V9.6 H6.4 V13 Z" fill="url(#gFy)" stroke="#cf8a00" stroke-width="1"/></svg>
<svg class="abs" style="left:391px;top:86px" width="14" height="14" viewBox="0 0 14 14"><path d="M13.2 7 L7.6 1 V4.4 H1 V9.6 H7.6 V13 Z" fill="#fbfbfb" stroke="#9a9a9a" stroke-width="1"/></svg>
<svg class="abs" style="left:415px;top:86.5px" width="15" height="13.5"><use href="#iYF"/></svg>
<svg class="abs" style="left:419px;top:87px" width="9" height="12" viewBox="0 0 9 12"><path d="M4.5 0.6 L8.4 5 H6 V11 H3 V5 H0.6 Z" fill="#1fc42a" stroke="#0d8c18" stroke-width="0.7"/></svg>
<svg class="abs" style="left:440px;top:86.5px" width="15" height="13.5"><use href="#iYF"/></svg>
<svg class="abs" style="left:442.5px;top:89px" width="10" height="10" viewBox="0 0 10 10"><path d="M1.4 4.6 A3.6 3.6 0 0 1 7.6 2.4 L8.8 1.2 V5 H5 L6.4 3.6 A2 2 0 0 0 3 4.6 Z M8.6 5.6 A3.6 3.6 0 0 1 2.4 7.8 L1.2 9 V5.2 H5 L3.6 6.6 A2 2 0 0 0 7 5.6 Z" fill="#22b02c" stroke="#0d7a16" stroke-width="0.5"/></svg>
<svg class="abs" style="left:465px;top:86.5px" width="15" height="13.5"><use href="#iYF"/></svg>
<svg class="abs" style="left:467.5px;top:88.5px" width="10" height="10" viewBox="0 0 10 10"><path d="M5 0.6 L6.3 3.6 L9.5 3.9 L7.1 6 L7.8 9.2 L5 7.5 L2.2 9.2 L2.9 6 L0.5 3.9 L3.7 3.6 Z" fill="#fff7b0" stroke="#b98900" stroke-width="0.7"/></svg>
<svg class="abs" style="left:490px;top:86.5px" width="15" height="13.5"><use href="#iYF"/></svg>
<svg class="abs" style="left:497px;top:85.5px" width="8" height="8" viewBox="0 0 8 8"><path d="M4 0.4 V7.6 M0.4 4 H7.6 M1.4 1.4 L6.6 6.6 M6.6 1.4 L1.4 6.6" stroke="#ee4a2a" stroke-width="0.9"/></svg>
<!-- copy to -->
<svg class="abs" style="left:515px;top:86px" width="15" height="15" viewBox="0 0 15 15"><path d="M3.4 3 Q3.4 1.4 5 1.4 H7.6 L9 2.8 H13 Q14.4 2.8 14.4 4.4 V9.4 Q14.4 11 12.8 11 H5 Q3.4 11 3.4 9.4 Z" fill="url(#gFy)" stroke="#b98e2a" stroke-width="0.9"/><rect x="0.8" y="8.6" width="6.2" height="5.8" fill="#fff" stroke="#7a7acc" stroke-width="0.9"/><path d="M4.6 10.4 L9.4 5.6 L8 4.2 H12.4 V8.6 L11 7.2 L6.2 12 Z" fill="#13a838" stroke="#0a6e22" stroke-width="0.6"/></svg>
<!-- move to -->
<svg class="abs" style="left:539.5px;top:86px" width="15" height="15" viewBox="0 0 15 15"><path d="M3.4 3 Q3.4 1.4 5 1.4 H7.6 L9 2.8 H13 Q14.4 2.8 14.4 4.4 V9.4 Q14.4 11 12.8 11 H5 Q3.4 11 3.4 9.4 Z" fill="url(#gFy)" stroke="#b98e2a" stroke-width="0.9"/><rect x="0.8" y="8.6" width="6.2" height="5.8" fill="#fff" stroke="#7a7acc" stroke-width="0.9"/><path d="M3.4 6 H9.4 V4 L13.4 7 L9.4 10 V8 H3.4 Z" fill="#2fd232" stroke="#0a7a1c" stroke-width="0.6"/></svg>
<!-- delete -->
<svg class="abs" style="left:565.5px;top:87px" width="13" height="13" viewBox="0 0 13 13"><path d="M1.4 1.4 L11.6 11.6 M11.6 1.4 L1.4 11.6" stroke="#dc3a1a" stroke-width="2.5" stroke-linecap="round"/></svg>
<!-- thumbs view -->
<svg class="abs" style="left:591px;top:87.5px" width="14" height="13" viewBox="0 0 14 13"><rect x="0.6" y="0.6" width="12.8" height="11.8" fill="#fff" stroke="#5a5acc" stroke-width="1.1"/><rect x="0.6" y="0.6" width="12.8" height="2" fill="#5a5acc"/><rect x="1.8" y="3.6" width="3" height="3" fill="#17a838"/><rect x="5.5" y="3.6" width="3" height="3" fill="#17a838"/><rect x="9.2" y="3.6" width="3" height="3" fill="#17a838"/><rect x="1.8" y="7.6" width="3" height="3" fill="#f08a1c"/><rect x="5.5" y="7.6" width="3" height="3" fill="#f08a1c"/><rect x="9.2" y="7.6" width="3" height="3" fill="#f08a1c"/></svg>
<!-- details grid -->
<svg class="abs" style="left:614.5px;top:87px" width="15" height="13" viewBox="0 0 15 13"><path d="M3 1 H15 M0 3.2 H15" stroke="#6a6ad0" stroke-width="1" stroke-dasharray="2.4 0.8"/><path d="M0.6 5.4 H15 M0.6 7.6 H15 M0.6 9.8 H15 M0.6 12 H15" stroke="#4a4ac4" stroke-width="1.1" stroke-dasharray="1 1.2 2.4 0.9 2.4 0.9 2.4 0.9 2.4 0.9"/></svg>
<!-- list -->
<svg class="abs" style="left:640px;top:87px" width="14" height="13" viewBox="0 0 14 13"><g fill="none" stroke="#6a6ad4" stroke-width="0.8"><rect x="0.5" y="1" width="1.8" height="1.8"/><rect x="7.3" y="1" width="1.8" height="1.8"/><rect x="0.5" y="5.5" width="1.8" height="1.8"/><rect x="7.3" y="5.5" width="1.8" height="1.8"/><rect x="0.5" y="10" width="1.8" height="1.8"/><rect x="7.3" y="10" width="1.8" height="1.8"/><path d="M3.4 1.9 H5.8 M10.2 1.9 H13.4 M3.4 6.4 H5.8 M10.2 6.4 H13.4 M3.4 10.9 H5.8 M10.2 10.9 H13.4" stroke-width="1.1"/></g></svg>
<!-- Image combobox -->
<div class="abs" style="left:666px;top:85px;width:40px;height:17px;background:#fff;border:1px solid #b0ab9e"></div>
<span class="t" style="left:668.5px;top:88px;font-size:11.5px">Image</span>
<!-- address bar -->
<div class="abs" style="left:361px;top:105px;width:311px;height:22px;background:#fff;border:1px solid #b9b9b9;border-bottom-color:#6e6e6e;border-radius:3px"></div>
<svg class="abs" style="left:363.5px;top:109.5px" width="15" height="12.5" viewBox="0 0 16 14" preserveAspectRatio="none"><use href="#iFolder"/></svg>
<span class="t" style="left:381.5px;top:111px;font-size:11px">C:\Users\KOMAL\Downloads\</span>
<svg class="abs" style="left:659.5px;top:114.5px" width="9" height="6" viewBox="0 0 9 6"><path d="M0.6 0.8 L4.5 4.8 L8.4 0.8" fill="none" stroke="#555" stroke-width="1"/></svg>
<!-- trash -->
<svg class="abs" style="left:677.5px;top:109px" width="15" height="15" viewBox="0 0 15 15"><path d="M1.4 3.2 L2.2 13 Q2.3 14 3.4 14 H11.6 Q12.7 14 12.8 13 L13.6 3.2 Z" fill="#d6d3f2" stroke="#8a86d2" stroke-width="1"/><ellipse cx="7.5" cy="2.8" rx="6.6" ry="1.9" fill="#e8e8ee" stroke="#8a86d2" stroke-width="1"/><path d="M5 6 V12 M7.5 6 V12 M10 6 V12" stroke="#b7b3e6" stroke-width="0.9"/></svg>
<!-- right scroll track -->
<div class="abs" style="left:683px;top:131px;width:16px;height:372px;background:#f0f0f0"></div>
<div class="abs" style="left:689.5px;top:377px;width:2px;height:75px;background:#8c8c8c"></div>
<div class="abs" style="left:361px;top:130px;width:338px;height:1px;background:#adadad"></div>

<div id="right">
<div class="abs" style="left:0;top:0;width:1px;height:373px;background:#a2a2a2"></div>
<!-- row 0 -->
<div class="thumb" style="left:6px;top:-60px"></div>
<div class="abs" style="left:15px;top:-47px;width:103px;height:75px;background:#648cd3;overflow:hidden"><span class="t" style="left:0;width:103px;text-align:center;top:42.5px;font-size:10.6px;letter-spacing:0.6px;font-weight:bold;color:#eef2fb;font-family:'DejaVu Sans','Liberation Sans',sans-serif">No Preview</span></div>
<span class="meta" style="left:14.5px;top:35px">112x86</span>
<span class="meta r" style="left:85px;width:32px;text-align:right;top:35px">EPS</span>
<span class="cap" style="left:2px;top:54px">petersen.eps</span>
<div class="thumb" style="left:133.5px;top:-60px"></div>
<svg class="abs" style="left:138px;top:-47px" width="111" height="73" viewBox="0 0 111 73"><defs><filter id="tb0" x="-5%" y="-5%" width="110%" height="110%"><feGaussianBlur stdDeviation="0.5"/></filter></defs><rect width="111" height="73" fill="#b5b3b7"/><g filter="url(#tb0)"><path d="M58 47 H111 V50 L80 52 L58 51 Z" fill="#8e8c91"/><path d="M72 73 L111 53 V59 L84 73 Z" fill="#98969b"/><path d="M60 66 L111 70 V73 H60 Z" fill="#a3a1a6"/><path d="M0 47 H57 V61 L22 73 H0 Z" fill="#181818"/><rect x="1" y="52.5" width="19" height="6" fill="#9c9c9c"/><rect x="16" y="58.5" width="17" height="7.5" fill="#e4e4e4"/><rect x="21" y="52.5" width="14" height="5" fill="#77756f"/><rect x="35" y="53.5" width="17" height="4.5" fill="#5f7d4b"/><rect x="0" y="60" width="16" height="13" fill="#131313"/><path d="M2.5 50 V60 M6.5 50 V60 M10.5 50 V60 M14.5 50 V60 M18.5 50 V66 M22.5 50 V67 M26.5 50 V68 M30.5 50 V68 M34.5 50 V64 M38.5 50 V63 M42.5 50 V62 M46.5 50 V62 M50.5 50 V61 M54.5 50 V61" stroke="#121212" stroke-width="1.7"/><path d="M0 49.4 H57" stroke="#0e0e0e" stroke-width="2.6"/><path d="M27 49 V72" stroke="#0e0e0e" stroke-width="2.2"/><path d="M20 73 L57 60.6 L60 62 L30 73 Z" fill="#b88f78"/><path d="M57 47 H61.4 L61 61 H57.6 Z" fill="#5b80b4"/><path d="M64 47 H69 L68.4 62 H65 Z" fill="#6187ba"/><path d="M54.6 61.4 H60.6 V64.6 H54.6 Z" fill="#4a4a4a"/><path d="M64.4 62.6 H69.4 V66 H64.4 Z" fill="#d8d8d8"/><path d="M66.4 62 H69 V64 H66.4 Z" fill="#2e2e2e"/></g></svg>
<span class="meta" style="left:142px;top:35px">4256x2848</span>
<span class="meta r" style="left:212.5px;width:32px;text-align:right;top:35px">ARW</span>
<span class="cap" style="left:130px;top:54px">sony_a7s_iii_01.arw</span>
<!-- row 1 -->
<div class="thumb" style="left:6px;top:73px"></div>
<svg class="abs" style="left:11px;top:85px" width="111" height="73" viewBox="0 0 111 73"><defs><linearGradient id="gCor" x1="0" y1="0" x2="1" y2="0"><stop offset="0" stop-color="#0b0d0a"/><stop offset="0.4" stop-color="#12140f"/><stop offset="0.55" stop-color="#0a0c09"/><stop offset="1" stop-color="#0d100c"/></linearGradient><linearGradient id="gFlo" x1="0" y1="0" x2="0" y2="1"><stop offset="0" stop-color="#191c16"/><stop offset="1" stop-color="#292b22"/></linearGradient><filter id="tb1" x="-5%" y="-5%" width="110%" height="110%"><feGaussianBlur stdDeviation="0.7"/></filter><filter id="tb1b" x="-30%" y="-30%" width="160%" height="160%"><feGaussianBlur stdDeviation="1.6"/></filter><clipPath id="cc1"><rect width="111" height="73"/></clipPath></defs><g clip-path="url(#cc1)"><rect width="111" height="73" fill="url(#gCor)"/><g filter="url(#tb1)"><path d="M44 44 H63.5 L96 73 H18 Z" fill="url(#gFlo)"/><path d="M28 11.5 L76 11 L76 14.5 L31 15.5 Z" fill="#272c26"/><path d="M36 18.2 L70 17.6 L70 20 L38 20.8 Z" fill="#232822"/><path d="M42 23 L66 22.6 L66 24.4 L44 25 Z" fill="#1e231d"/><path d="M46 26.6 L63 26.4 L63 27.8 L47 28 Z" fill="#1a1f19"/><path d="M94.5 0 H111 V11 L106 12.6 L95 7 Z" fill="#7e887b"/><path d="M105.5 12.2 H111 V73 H106.5 Z" fill="#636e61"/><path d="M97 46 H107 V73 H100 Z" fill="#10141a"/><path d="M76.2 10.4 L97.3 9 L97.3 17 L92.7 23.2 H81.4 L76.2 18 Z" fill="#7c877a"/><path d="M81.4 23.2 H92.7 V66.4 L81.4 61 Z" fill="#889386"/><path d="M81.4 23.2 H84.6 V62.6 L81.4 61 Z" fill="#a3ad9f"/><path d="M68.9 20.4 L79.9 19.6 V25 L78 27.8 H72.6 L68.9 25 Z" fill="#6e796c"/><path d="M72.6 27.8 H78 V56 L72.6 53.4 Z" fill="#78837a"/><path d="M64.4 25.2 L70.8 24.7 V28.4 L69 29.6 H65.3 L64.4 28.4 Z" fill="#5b6659"/><path d="M65.3 29.6 H69 V50.6 L65.3 49 Z" fill="#647062"/><path d="M61.4 28 L64.6 27.8 V31 H62 Z M62.2 31 H64.2 V47 L62.2 46 Z" fill="#475245"/></g><path d="M22.6 11.4 L31.6 15.6 L30.6 19.4 L21.8 15 Z" fill="#ffffff" filter="url(#tb1)"/><path d="M32.6 19.4 L38 21.8 L37.4 24.4 L32 22 Z" fill="#f4f8ec" filter="url(#tb1)"/><path d="M38.8 24 L44.2 26.2 L43.8 28.2 L38.4 26 Z" fill="#dfe6d6" filter="url(#tb1)"/><ellipse cx="28" cy="15.6" rx="7" ry="4" fill="#6f7a68" opacity="0.5" filter="url(#tb1b)"/></g></svg>
<span class="meta" style="left:14.5px;top:167px">4256x2848</span>
<span class="meta r" style="left:85px;width:32px;text-align:right;top:167px">ARW</span>
<span class="cap" style="left:2px;top:186px">sony_a7s_iii_14.arw</span>
<div class="thumb" style="left:133.5px;top:73px"></div>
<svg class="abs" style="left:138px;top:85px" width="111" height="73" viewBox="0 0 111 73"><defs><filter id="tb2" x="-5%" y="-5%" width="110%" height="110%"><feGaussianBlur stdDeviation="0.6"/></filter><filter id="tb3" x="-50%" y="-50%" width="200%" height="200%"><feGaussianBlur stdDeviation="1"/></filter><clipPath id="cc2"><rect width="111" height="73"/></clipPath></defs><g clip-path="url(#cc2)"><rect width="111" height="73" fill="#050302"/><g filter="url(#tb2)"><path d="M0 16 L5.5 7 L19 24 V36 H0 Z" fill="#33200f"/><path d="M0 36 H19 L12 46 H0 Z" fill="#2a1a0c"/><path d="M0 20 H9 M0 24.5 H14 M0 29 H19 M0 33.5 H19 M0 38 H17 M0 42 H14" stroke="#1c1007" stroke-width="1.1"/><path d="M5.5 7 L26 10 L42 30 V46 H19 V24 Z" fill="#110905"/><path d="M0 47 H88 L60 60 L0 68 Z" fill="#150c06"/><path d="M36 11.6 L82 10.6 L86 15 V31 H42 V24 Z" fill="#20140b"/><rect x="37" y="13.4" width="5.2" height="3.2" fill="#eef0f6"/><rect x="43" y="12.8" width="11" height="3.4" fill="#c9cde2"/><rect x="55.6" y="12.8" width="9" height="3.4" fill="#857a76"/><rect x="66" y="12.8" width="16" height="3.4" fill="#463c36"/><rect x="39" y="20" width="5" height="3.8" fill="#f2dcb2"/><rect x="45" y="20" width="16" height="3.8" fill="#b58a56"/><rect x="56" y="20" width="4" height="3.8" fill="#4a3622"/><rect x="62.5" y="20" width="6" height="3.8" fill="#3a2a1a"/><rect x="69" y="20" width="15" height="3.8" fill="#8c7a64"/><path d="M42 25 H86 V29 H42 Z" fill="#3a2818"/><rect x="58" y="30" width="17" height="11" fill="#8c6c3c"/><rect x="63" y="31" width="8" height="9.4" fill="#c7b283"/><rect x="67.4" y="35" width="2.6" height="5.4" fill="#e9e9f2"/><rect x="43.6" y="30.6" width="1.6" height="11" fill="#6e3456"/><rect x="51.6" y="29.6" width="1.6" height="11" fill="#b9929c"/><rect x="59" y="33" width="1.6" height="8" fill="#8a4a8a"/><path d="M58 44.6 L84 41.6 L91 45 L64 50.4 Z" fill="#7a4a1c"/><path d="M0 50 L92 45 L96 47 L0 54 Z" fill="#20130a"/><rect x="100" y="36" width="11" height="3.6" fill="#5e4220"/><rect x="104" y="49.6" width="7" height="3" fill="#54391c"/><path d="M88 30 H111 V45 H92 Z" fill="#0b0806"/></g><circle cx="34" cy="12.8" r="2" fill="#ffae4a" filter="url(#tb2)"/><circle cx="34" cy="12.8" r="4" fill="#8a4a10" opacity="0.5" filter="url(#tb3)"/><circle cx="79" cy="33.4" r="1.3" fill="#ffd9a0"/><circle cx="88" cy="35" r="1.4" fill="#ffebcc"/><circle cx="68.6" cy="38.4" r="1.5" fill="#fff" filter="url(#tb2)"/><circle cx="79.4" cy="66.4" r="1.5" fill="#ff9648" filter="url(#tb2)"/><circle cx="88.2" cy="58.4" r="1.1" fill="#ffb870"/><circle cx="87.2" cy="55" r="1" fill="#ffc890"/><circle cx="99" cy="33.4" r="0.9" fill="#6a6af0"/><circle cx="103" cy="33.4" r="0.9" fill="#6a6af0"/><circle cx="99" cy="54" r="0.9" fill="#5a5ad0"/><circle cx="66" cy="62.4" r="0.9" fill="#49c08a"/><path d="M50 71.6 H64 V73 H50 Z" fill="#6a3e14"/></g></svg>
<span class="meta" style="left:142px;top:167px">4256x2848</span>
<span class="meta r" style="left:212.5px;width:32px;text-align:right;top:167px">ARW</span>
<span class="cap" style="left:130px;top:186px">sony_a7s_iii_15.arw</span>
<!-- row 2 -->
<div class="thumb" style="left:6px;top:205px"></div>
<svg class="abs" style="left:11px;top:217px" width="111" height="73" viewBox="0 0 111 73"><defs><radialGradient id="gPur" cx="0.55" cy="0" r="1" gradientTransform="translate(0.55 0) scale(0.6 1.05) translate(-0.55 0)"><stop offset="0" stop-color="#5c36f2"/><stop offset="0.16" stop-color="#3e20c8"/><stop offset="0.5" stop-color="#200c80"/><stop offset="1" stop-color="#0a0434"/></radialGradient></defs><rect width="111" height="73" fill="#08032a"/><rect width="111" height="54" fill="url(#gPur)"/><rect y="53" width="111" height="20" fill="#05020f"/><rect y="69" width="111" height="4" fill="#0d0630"/><path d="M0 8 H111" stroke="#10063a" stroke-width="0.8" opacity="0.7"/><path d="M36 0 V54 M82 0 V54" stroke="#10063a" stroke-width="0.7" opacity="0.6"/><path d="M57 33 Q57 31.4 59 31.4 Q61 31.4 61 33 V36.6 L65 38.6 L66 44 L65 54 V70 H55 V54 L54 44 L55 38.6 L57 36.6 Z" fill="#070318"/></svg>
<span class="meta" style="left:14.5px;top:299px">4256x2848</span>
<span class="meta r" style="left:85px;width:32px;text-align:right;top:299px">ARW</span>
<span class="cap" style="left:2px;top:318px">sony_a7s_iii_16.arw</span>
<div class="abs" style="left:132px;top:204px;width:124px;height:110px;border:3.5px solid #9b9b9b;border-radius:4px;background:#f1f0ec"></div>
<svg class="abs" style="left:139px;top:218px" width="110" height="73"><use href="#treePhoto"/></svg>
<span class="meta" style="left:142px;top:299px">4256x2848</span>
<span class="meta r" style="left:212.5px;width:32px;text-align:right;top:299px">ARW</span>
<span class="cap" style="left:130px;top:318px">sony_a7s_iii_20.arw</span>
<!-- row 3 -->
<div class="thumb" style="left:6px;top:338px"></div>
<div class="abs" style="left:15px;top:348px;width:103px;height:30px;background:#648cd3;overflow:hidden"><span class="t" style="left:0;width:103px;text-align:center;top:21.5px;font-size:10.6px;letter-spacing:0.6px;font-weight:bold;color:#eef2fb;font-family:'DejaVu Sans','Liberation Sans',sans-serif">EPS</span></div>
</div>
<!-- STATUS -->
<div id="status"><span class="t" style="left:3.5px;top:5.5px;font-size:10.3px;letter-spacing:-0.06px">sony_a7s_iii_20.arw [ 12 / 13 ]</span>
<div class="abs" style="left:357px;top:4.5px;width:1px;height:14px;background:#c9c5b6"></div>
<div class="abs" style="left:459px;top:4.5px;width:1px;height:14px;background:#c9c5b6"></div>
<div class="abs" style="left:606px;top:4.5px;width:1px;height:14px;background:#c9c5b6"></div>
<span class="t" style="left:388.5px;top:5.5px;font-size:10.3px;letter-spacing:-0.3px">8 Folders</span>
<span class="t" style="left:495px;top:5.5px;font-size:10.3px;letter-spacing:-0.35px">13 Files (68.7 MB)</span>
<span class="t" style="left:642.5px;top:5.5px;font-size:10.3px;letter-spacing:-0.25px">0 Selected</span>
<svg class="abs" style="left:689px;top:10.5px" width="9" height="9" viewBox="0 0 9 9"><g fill="#b0b0b0"><rect x="6.5" y="0.5" width="1.6" height="1.6"/><rect x="3.5" y="3.5" width="1.6" height="1.6"/><rect x="6.5" y="3.5" width="1.6" height="1.6"/><rect x="0.5" y="6.5" width="1.6" height="1.6"/><rect x="3.5" y="6.5" width="1.6" height="1.6"/><rect x="6.5" y="6.5" width="1.6" height="1.6"/></g></svg>
</div>
<div class="abs" style="left:0;top:504.3px;width:700px;height:1px;background:#dcdcdc"></div>
<!-- watermark -->
<svg class="abs" style="left:98px;top:135.5px" width="46" height="46" viewBox="0 0 46 46"><rect width="46" height="46" fill="#0a5ce0"/><path d="M0 0 H46 L23 23 Z" fill="#0fd0f6"/><path d="M46 0 V46 L23 23 Z" fill="#0a9aee"/><path d="M0 0 V46 L23 23 Z" fill="#0e86ea"/><path d="M0 46 H46 L23 23 Z" fill="#0a4fd8"/><path d="M0 0 L46 46 M46 0 L0 46" stroke="#8fdcff" stroke-width="0.9" opacity="0.75"/></svg>
<span class="t" style="left:145.5px;top:145px;font-size:27.6px;letter-spacing:-0.35px;color:#111">TheWindowsClub</span>
<!-- window edges -->
<div class="abs" style="left:0;top:0;width:1.2px;height:525px;background:#a8a8a8"></div>
<div class="abs" style="left:0;top:0;width:700px;height:1px;background:#bdbdbd"></div>
<div class="abs" style="left:698.5px;top:0;width:1.5px;height:525px;background:linear-gradient(to bottom,#a6a6a6 0,#a6a6a6 28px,#3f6aa6 30px,#3a5f94 120px,#5a5f68 300px,#5e5a5c 525px)"></div>
<div class="abs" style="left:0;top:523.5px;width:700px;height:1.5px;background:#a4a4a4"></div>
<svg class="abs" style="left:0;top:0" width="7" height="7" viewBox="0 0 7 7"><path d="M0 0 H7 Q0 0 0 7 Z" fill="#dedede"/><path d="M0.6 7 Q0.6 0.6 7 0.6" fill="none" stroke="#a0a0a0" stroke-width="1.1"/></svg>
<svg class="abs" style="left:0;top:518px" width="7" height="7" viewBox="0 0 7 7"><path d="M0 7 H7 Q0 7 0 0 Z" fill="#b9b9b9"/></svg>
<svg class="abs" style="left:692px;top:0" width="8" height="8" viewBox="0 0 8 8"><path d="M8 0 H0 Q6.6 0 6.6 8 H8 Z" fill="#dedede"/><path d="M0 0.6 Q6.4 0.6 6.4 8" fill="none" stroke="#a0a0a0" stroke-width="1.1"/></svg>
</div>
</body>
</html>
